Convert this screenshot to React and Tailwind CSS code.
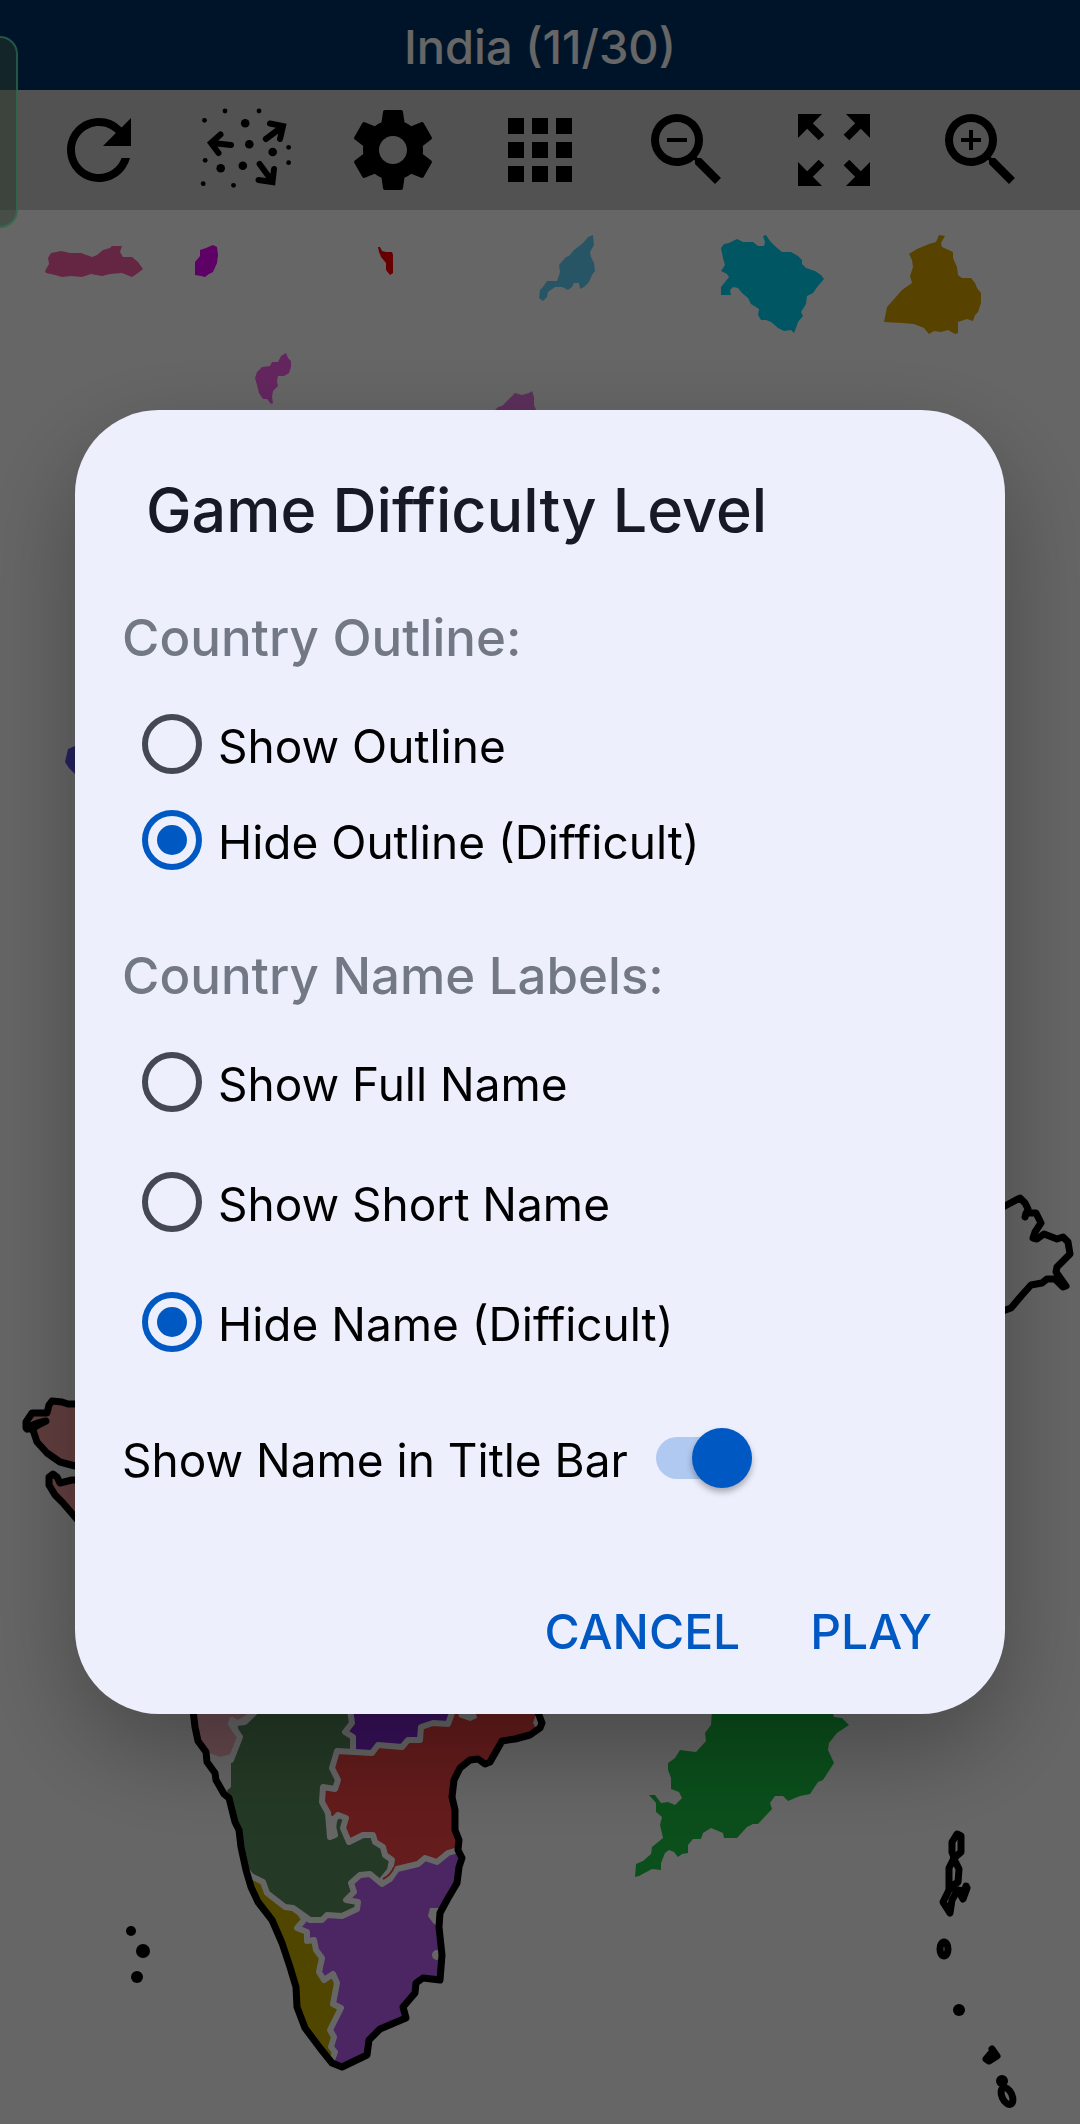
/**
 * Map puzzle game screen.
 * Shows the board with the title bar and toolbar, and the difficulty dialog on top of it.
 */
import React, {useState} from 'react';
import {MdApps, MdRefresh, MdZoomIn, MdZoomOut, MdZoomOutMap} from 'react-icons/md';

// puzzle pieces that still lie around the board
const pieces = [
  {color: '#fc5fab', points: '45,271 49,264 48,258 51,253 61,251 70,253 81,253 92,257 97,255 103,250 110,248 112,246 122,246 120,252 123,257 132,257 138,262 143,269 138,273 132,277 122,273 110,274 102,276 91,274 82,277 71,276 62,277 55,275 46,273'},
  {color: '#ee00ff', points: '195,275 195,262 200,256 200,250 206,248 213,245 217,247 218,255 217,263 213,272 209,274 205,277 201,276'},
  {color: '#ff0000', points: '378,247 380,247 382,251 386,252 392,252 393,255 393,273 390,275 386,270 386,263 381,257 379,252'},
  {color: '#fa5fee', points: '255,378 257,372 262,367 270,366 272,362 278,362 281,356 286,353 288,358 291,361 291,367 289,373 284,376 278,376 277,381 278,386 273,391 272,397 273,403 271,404 267,399 263,399 259,393 257,385'},
  {color: '#e678e6', points: '495,410 498,407 502,406 510,398 515,393 522,395 529,393 532,391 534,397 534,405 537,412 495,412'},
  {color: '#62d4ff', points: '593,235 594,245 590,252 591,257 594,263 595,271 592,275 589,282 584,287 580,289 579,283 574,283 572,287 568,290 562,287 555,287 548,292 547,297 543,301 539,298 540,290 543,287 547,281 557,281 560,272 559,265 566,257 569,256 574,250 583,243 588,237'},
  {color: '#00daf8', points: '721,248 724,244 729,243 737,239 743,242 753,242 758,246 764,246 765,242 763,236 766,235 770,241 776,247 782,252 791,252 798,256 802,260 802,264 806,268 815,271 821,275 824,279 818,286 813,293 807,296 806,304 801,312 803,316 798,322 796,328 794,333 791,330 784,331 778,328 771,322 766,320 761,320 758,315 759,309 751,304 748,298 742,293 738,288 733,287 730,290 731,295 721,295 721,287 729,277 727,274 721,271 725,265 723,258'},
  {color: '#daa500', points: '939,235 945,236 941,243 942,247 953,252 953,258 957,267 958,275 962,278 971,278 975,283 977,288 981,293 981,303 978,312 975,315 973,321 967,319 958,322 958,333 955,334 948,330 941,332 934,331 929,334 924,328 914,324 902,323 884,322 887,307 895,298 902,290 912,283 910,276 913,267 912,260 909,254 917,249 929,244 936,242'},
  {color: '#5a53ee', points: '80,746 75,746 68,749 65,762 69,768 75,774 80,774'},
  {color: '#1cc646', points: '712,1710 711,1725 705,1733 706,1741 696,1752 680,1750 675,1758 668,1763 668,1770 671,1778 671,1789 679,1792 682,1798 675,1805 668,1802 661,1803 655,1795 649,1795 656,1803 656,1812 662,1817 660,1825 663,1838 652,1847 651,1854 643,1861 636,1864 635,1877 639,1876 652,1869 661,1870 661,1863 665,1853 669,1850 674,1852 678,1857 682,1854 688,1853 688,1845 693,1839 701,1839 703,1833 711,1828 723,1833 724,1838 737,1838 747,1827 753,1824 758,1824 772,1809 770,1803 775,1796 783,1796 788,1801 800,1796 810,1794 818,1782 823,1780 834,1763 828,1750 829,1743 837,1733 849,1725 842,1718 834,1717 832,1710'},
];

// states that are already placed on the map
const states = [
  {color: '#ffb6c1', points: '195,1710 195,1727 198,1741 207,1754 220,1757 231,1754 238,1737 230,1722 238,1720 254,1710'},
  {color: '#5c915f', points: '257,1710 245,1722 237,1723 240,1737 231,1760 231,1787 227,1790 229,1798 232,1810 235,1822 239,1830 241,1847 246,1870 251,1874 263,1882 267,1893 285,1907 293,1908 310,1920 322,1920 327,1914 342,1915 357,1907 358,1902 346,1900 354,1892 351,1883 360,1875 370,1873 380,1880 390,1870 391,1860 385,1855 383,1847 375,1842 373,1835 363,1835 349,1842 343,1828 346,1817 338,1815 335,1835 330,1837 328,1813 322,1802 323,1787 335,1787 338,1780 332,1768 337,1752 352,1752 353,1737 345,1732 352,1723 350,1710'},
  {color: '#8a2be2', points: '353,1710 352,1724 347,1732 355,1738 353,1752 372,1752 378,1745 402,1747 408,1740 420,1740 421,1727 433,1723 448,1724 453,1710'},
  {color: '#fc4646', points: '337,1752 372,1752 378,1745 402,1747 408,1740 420,1740 421,1727 433,1723 448,1724 455,1710 537,1710 540,1728 530,1735 515,1739 502,1741 490,1762 485,1764 478,1759 470,1760 460,1768 454,1780 452,1797 455,1810 455,1830 459,1840 458,1850 448,1853 437,1862 425,1858 418,1864 397,1870 382,1883 390,1870 391,1860 385,1855 383,1847 375,1842 373,1835 363,1835 349,1842 343,1828 346,1817 338,1815 332,1816 328,1813 322,1802 323,1787 335,1787 338,1780 332,1768'},
  {color: '#bb5ff8', points: '458,1850 448,1853 437,1862 425,1858 418,1864 397,1870 382,1883 370,1873 360,1875 351,1883 354,1892 346,1900 358,1902 357,1907 342,1915 327,1914 322,1920 310,1920 300,1922 297,1928 307,1932 307,1941 315,1940 316,1950 322,1958 319,1972 324,1980 333,1974 337,1983 333,2003 341,2008 330,2030 334,2037 331,2047 335,2052 332,2063 342,2067 367,2055 369,2040 380,2029 406,2018 403,2007 415,1993 416,1983 423,1978 440,1980 442,1955 439,1927 440,1913 447,1900 457,1883 459,1867 462,1858'},
  {color: '#c8af00', points: '251,1874 263,1882 267,1893 285,1907 293,1908 301,1920 297,1928 307,1932 307,1941 315,1940 316,1950 322,1958 319,1972 324,1980 333,1974 337,1983 333,2003 341,2008 330,2030 334,2037 331,2047 335,2052 332,2063 320,2048 305,2028 297,2007 296,1987 290,1967 282,1943 272,1920 258,1902 251,1887 246,1872'},
  {color: '#f59c9c', points: '80,1404 68,1404 62,1402 52,1401 49,1405 47,1413 32,1413 26,1422 26,1428 33,1430 37,1442 47,1453 60,1462 75,1466 80,1466'},
  {color: '#f59c9c', points: '80,1480 72,1480 60,1483 57,1477 53,1474 49,1477 49,1485 55,1495 63,1503 75,1517 82,1525'},
];

const borders = [
  '257,1710 245,1722 237,1723 232,1720 231,1724 240,1737 231,1760',
  '350,1710 352,1723 345,1732 353,1737 353,1751',
  '453,1710 448,1724 433,1723 421,1727 420,1740 408,1740 402,1747 378,1745 372,1753 337,1751 332,1768 338,1780 335,1789 323,1787 322,1802 328,1813 330,1837 335,1835 332,1822 338,1815 346,1818 343,1828 349,1842 363,1835 373,1835 375,1842 383,1847 385,1855 392,1860 390,1870 382,1880',
  '246,1870 251,1876 263,1882 267,1893 285,1907 293,1908 310,1920 322,1920 327,1915 342,1916 357,1909 358,1902 346,1900 354,1892 351,1883 360,1875 370,1874 382,1884 390,1879 397,1869 418,1864 425,1858 437,1862 448,1853 458,1850',
  '304,1920 297,1928 307,1932 307,1941 314,1940 316,1950 322,1958 319,1972 324,1980 333,1974 337,1983 333,2004 341,2008 330,2030 334,2037 331,2047 335,2052 332,2060',
];

const coasts = [
  '193,1710 195,1727 198,1741 206,1752 207,1762 215,1773 216,1780 224,1794 229,1798 232,1810 235,1822 239,1830 241,1847 246,1870 251,1887 258,1902 272,1920 282,1943 290,1967 296,1987 297,2007 305,2028 320,2048 332,2063 342,2067 367,2055 369,2040 380,2029 406,2018 403,2007 415,1993 416,1983 423,1978 440,1980 442,1955 439,1927 440,1913 447,1900 457,1883 459,1867 462,1858 458,1850 459,1840 455,1830 455,1810 452,1797 454,1780 460,1768 470,1760 478,1759 485,1764 490,1762 502,1741 515,1739 530,1735 540,1728 542,1723 537,1710',
  '80,1404 68,1404 62,1402 52,1401 49,1405 47,1413 32,1413 26,1422 26,1428 33,1430 37,1442 47,1453 60,1462 75,1466 80,1466',
  '27,1429 30,1426 38,1423 46,1421 38,1425 32,1429',
  '80,1480 72,1480 60,1483 57,1477 53,1474 49,1477 49,1485 55,1495 63,1503 75,1517 82,1525',
  '1000,1208 1003,1207 1020,1198 1025,1203 1028,1209 1025,1217 1026,1213 1036,1213 1041,1223 1035,1232 1033,1238 1037,1239 1044,1234 1057,1239 1063,1237 1068,1242 1070,1254 1057,1267 1056,1272 1066,1286 1063,1287 1055,1279 1047,1279 1042,1283 1031,1285 1022,1295 1011,1308 1000,1312',
];

const islands = [
  '952,1852 952,1842 957,1834 961,1836 961,1852 954,1858 952,1852',
  '954,1858 949,1868 949,1888 958,1882 959,1869 954,1859',
  '950,1888 943,1902 950,1913 952,1900 957,1891 950,1886',
  '966,1886 964,1891 958,1890 963,1899 967,1888',
  '992,2049 997,2056 989,2061 986,2059 992,2052 993,2057',
];

const outlineOptions = [
  {value: 'show', label: 'Show Outline'},
  {value: 'hide', label: 'Hide Outline (Difficult)'},
];

const nameOptions = [
  {value: 'full', label: 'Show Full Name'},
  {value: 'short', label: 'Show Short Name'},
  {value: 'hide', label: 'Hide Name (Difficult)'},
];

function ScatterIcon() {
  return (
    <svg viewBox="0 0 96 96" className="size-24" fill="currentColor">
      <circle cx="27" cy="9" r="2.4"/>
      <circle cx="61" cy="9" r="2.4"/>
      <circle cx="6.5" cy="18.3" r="2.4"/>
      <circle cx="90.6" cy="45.3" r="2.4"/>
      <circle cx="90.6" cy="60.7" r="2.4"/>
      <circle cx="7.2" cy="58.3" r="2.4"/>
      <circle cx="5.2" cy="81.7" r="2.4"/>
      <circle cx="35.5" cy="83.3" r="2.4"/>
      <circle cx="47.2" cy="21.3" r="4.3"/>
      <circle cx="51.3" cy="42.3" r="4.3"/>
      <circle cx="74.7" cy="50" r="4.3"/>
      <circle cx="22.7" cy="66.3" r="4.3"/>
      <circle cx="44.8" cy="63.7" r="4.3"/>
      <g fill="none" stroke="currentColor" strokeWidth="6" strokeLinecap="round" strokeLinejoin="miter">
        <path d="M33 43 14 41M22.5 32.5 13 41 20.5 51"/>
        <path d="M67.8 37 84 25M72 21.5 85 24 82 37"/>
        <path d="M61.6 62 74 79M60.5 78 74.5 80 76 67"/>
      </g>
    </svg>
  );
}

function GearIcon() {
  return (
    <svg viewBox="0 0 24 24" className="size-24" fill="currentColor">
      <path d="M19.43 12.98c.04-.32.07-.64.07-.98s-.03-.66-.07-.98l2.11-1.65c.19-.15.24-.42.12-.64l-2-3.46c-.12-.22-.39-.3-.61-.22l-2.49 1c-.52-.4-1.08-.73-1.69-.98l-.38-2.65C14.46 2.18 14.25 2 14 2h-4c-.25 0-.46.18-.49.42l-.38 2.65c-.61.25-1.17.59-1.69.98l-2.49-1c-.23-.09-.49 0-.61.22l-2 3.46c-.13.22-.07.49.12.64l2.11 1.65c-.04.32-.07.65-.07.98s.03.66.07.98l-2.11 1.65c-.19.15-.24.42-.12.64l2 3.46c.12.22.39.3.61.22l2.49-1c.52.4 1.08.73 1.69.98l.38 2.65c.03.24.24.42.49.42h4c.25 0 .46-.18.49-.42l.38-2.65c.61-.25 1.17-.59 1.69-.98l2.49 1c.23.09.49 0 .61-.22l2-3.46c.12-.22.07-.49-.12-.64l-2.11-1.65zM12 15.5c-1.93 0-3.5-1.57-3.5-3.5s1.57-3.5 3.5-3.5 3.5 1.57 3.5 3.5-1.57 3.5-3.5 3.5z"/>
    </svg>
  );
}

const tools = [
  {label: 'Restart', icon: <MdRefresh className="size-24"/>},
  {label: 'Scatter pieces', icon: <ScatterIcon/>},
  {label: 'Settings', icon: <GearIcon/>},
  {label: 'All maps', icon: <MdApps className="size-24"/>},
  {label: 'Zoom out', icon: <MdZoomOut className="size-24"/>},
  {label: 'Fit to screen', icon: <MdZoomOutMap className="size-24"/>},
  {label: 'Zoom in', icon: <MdZoomIn className="size-24"/>},
];

function MapBoard() {
  return (
    <svg viewBox="0 210 1080 1914" className="block w-full" aria-hidden="true">
      {pieces.map((p) => <polygon key={p.points} points={p.points} fill={p.color}/>)}
      {states.map((s) => <polygon key={s.points} points={s.points} fill={s.color}/>)}

      <g fill="none" stroke="#fff" strokeWidth="6" strokeLinejoin="round" strokeLinecap="round">
        {borders.map((b) => <polyline key={b} points={b}/>)}
      </g>
      <g fill="#fff">
        <path d="M207 1752 220 1757 231 1755 231 1787 226 1791 216 1780z"/>
        <path d="M458 1712 475 1710 477 1718 470 1721 459 1717z"/>
        <path d="M440 1908H430L428 1916 433 1923 440 1928z"/>
        <path d="M536 1714 533 1723 536 1728 541 1722z"/>
        <circle cx="437" cy="1955" r="5"/>
      </g>
      <path d="M383 1879Q391 1875 394 1867" fill="none" stroke="#fc4646" strokeWidth="2"/>

      <g fill="none" stroke="#000" strokeWidth="7" strokeLinejoin="round" strokeLinecap="round">
        {coasts.map((c) => <polyline key={c} points={c}/>)}
        {islands.map((i) => <polyline key={i} points={i}/>)}
        <ellipse cx="944" cy="1949" rx="4" ry="7"/>
        <ellipse cx="1007" cy="2096" rx="5" ry="9" transform="rotate(-25 1007 2096)"/>
      </g>
      <circle cx="959" cy="2010" r="6"/>
      <circle cx="1002" cy="2081" r="6"/>
      <circle cx="131" cy="1931" r="5"/>
      <circle cx="143" cy="1951" r="7"/>
      <circle cx="137" cy="1977" r="6"/>
    </svg>
  );
}

function RadioRow({name, option, checked, onChange, className}) {
  return (
    <label className={`flex items-center gap-4 pl-5 text-[46px] leading-[56px] text-black ${className}`}>
      <input
        type="radio"
        name={name}
        value={option.value}
        checked={checked}
        onChange={() => onChange(option.value)}
        className="grid size-[60px] shrink-0 appearance-none place-content-center rounded-full border-[6px] border-[#434852] checked:border-[#0059c3] checked:before:size-[30px] checked:before:rounded-full checked:before:bg-[#0059c3] checked:before:content-['']"
      />
      <span className="pt-1">{option.label}</span>
    </label>
  );
}

export default function App() {
  const [outline, setOutline] = useState('hide');
  const [nameLabel, setNameLabel] = useState('hide');
  const [showTitle, setShowTitle] = useState(true);
  const [open, setOpen] = useState(true);

  return (
    <div className="relative min-h-screen bg-white font-[Inter,Roboto,sans-serif]">
      <header className="flex h-[90px] items-center justify-center bg-[#003266] pt-1">
        <h1 className="text-[47px] leading-[56px] font-medium text-white">India (11/30)</h1>
      </header>

      <nav className="flex h-[120px] items-center bg-[#cdcdcd] px-[26px]">
        {tools.map((tool) => (
          <button key={tool.label} type="button" aria-label={tool.label} className="flex flex-1 justify-center text-black">
            {tool.icon}
          </button>
        ))}
      </nav>

      <MapBoard/>

      {/* Difficulty dialog */}
      {open && (
        <div className="fixed inset-0 flex items-center justify-center bg-black/60 px-[75px]">
          <div
            role="dialog"
            aria-labelledby="difficulty-title"
            className="w-full rounded-[84px] bg-[#edeffd] px-[47px] pt-16 pb-[46px] shadow-[0_36px_100px_rgba(0,0,0,0.3)]"
          >
            <h2 id="difficulty-title" className="pl-6 text-[61px] leading-[72px] font-medium text-[#171a25]">
              Game Difficulty Level
            </h2>

            <fieldset className="mt-[62px]">
              <legend className="mb-7 text-[51px] leading-[60px] font-medium text-[#737885]">
                Country Outline:
              </legend>
              {outlineOptions.map((option) => (
                <RadioRow
                  key={option.value}
                  name="outline"
                  option={option}
                  checked={outline === option.value}
                  onChange={setOutline}
                  className="h-24"
                />
              ))}
            </fieldset>

            <fieldset className="mt-[58px]">
              <legend className="mb-4 text-[51px] leading-[60px] font-medium text-[#737885]">
                Country Name Labels:
              </legend>
              {nameOptions.map((option) => (
                <RadioRow
                  key={option.value}
                  name="name-label"
                  option={option}
                  checked={nameLabel === option.value}
                  onChange={setNameLabel}
                  className="h-[120px]"
                />
              ))}
            </fieldset>

            <label className="mt-7 flex h-24 items-center gap-7 text-[46px] leading-[56px] text-black">
              <span className="pt-1">Show Name in Title Bar</span>
              <input
                type="checkbox"
                role="switch"
                checked={showTitle}
                onChange={(e) => setShowTitle(e.target.checked)}
                className="flex h-[42px] w-24 shrink-0 appearance-none items-center rounded-full bg-[#c9ccd6] before:size-[60px] before:shrink-0 before:rounded-full before:bg-white before:shadow-[0_4px_6px_rgba(0,0,0,0.3)] before:content-[''] checked:justify-end checked:bg-[#b0c9f0] checked:before:bg-[#0059c3]"
              />
            </label>

            <div className="mt-[90px] flex justify-end gap-[70px] pr-[26px]">
              <button type="button" onClick={() => setOpen(false)} className="text-[48px] leading-[72px] font-medium text-[#0059c3]">
                CANCEL
              </button>
              <button type="button" onClick={() => setOpen(false)} className="text-[48px] leading-[72px] font-medium text-[#0059c3]">
                PLAY
              </button>
            </div>
          </div>
        </div>
      )}

      {/* Edge panel handle, always over the screen */}
      <div className="fixed top-9 left-0 h-48 w-[18px] rounded-r-[18px] border-2 border-l-0 border-[#2f7a55]/60 bg-[#253528]/50"/>
    </div>
  );
}
